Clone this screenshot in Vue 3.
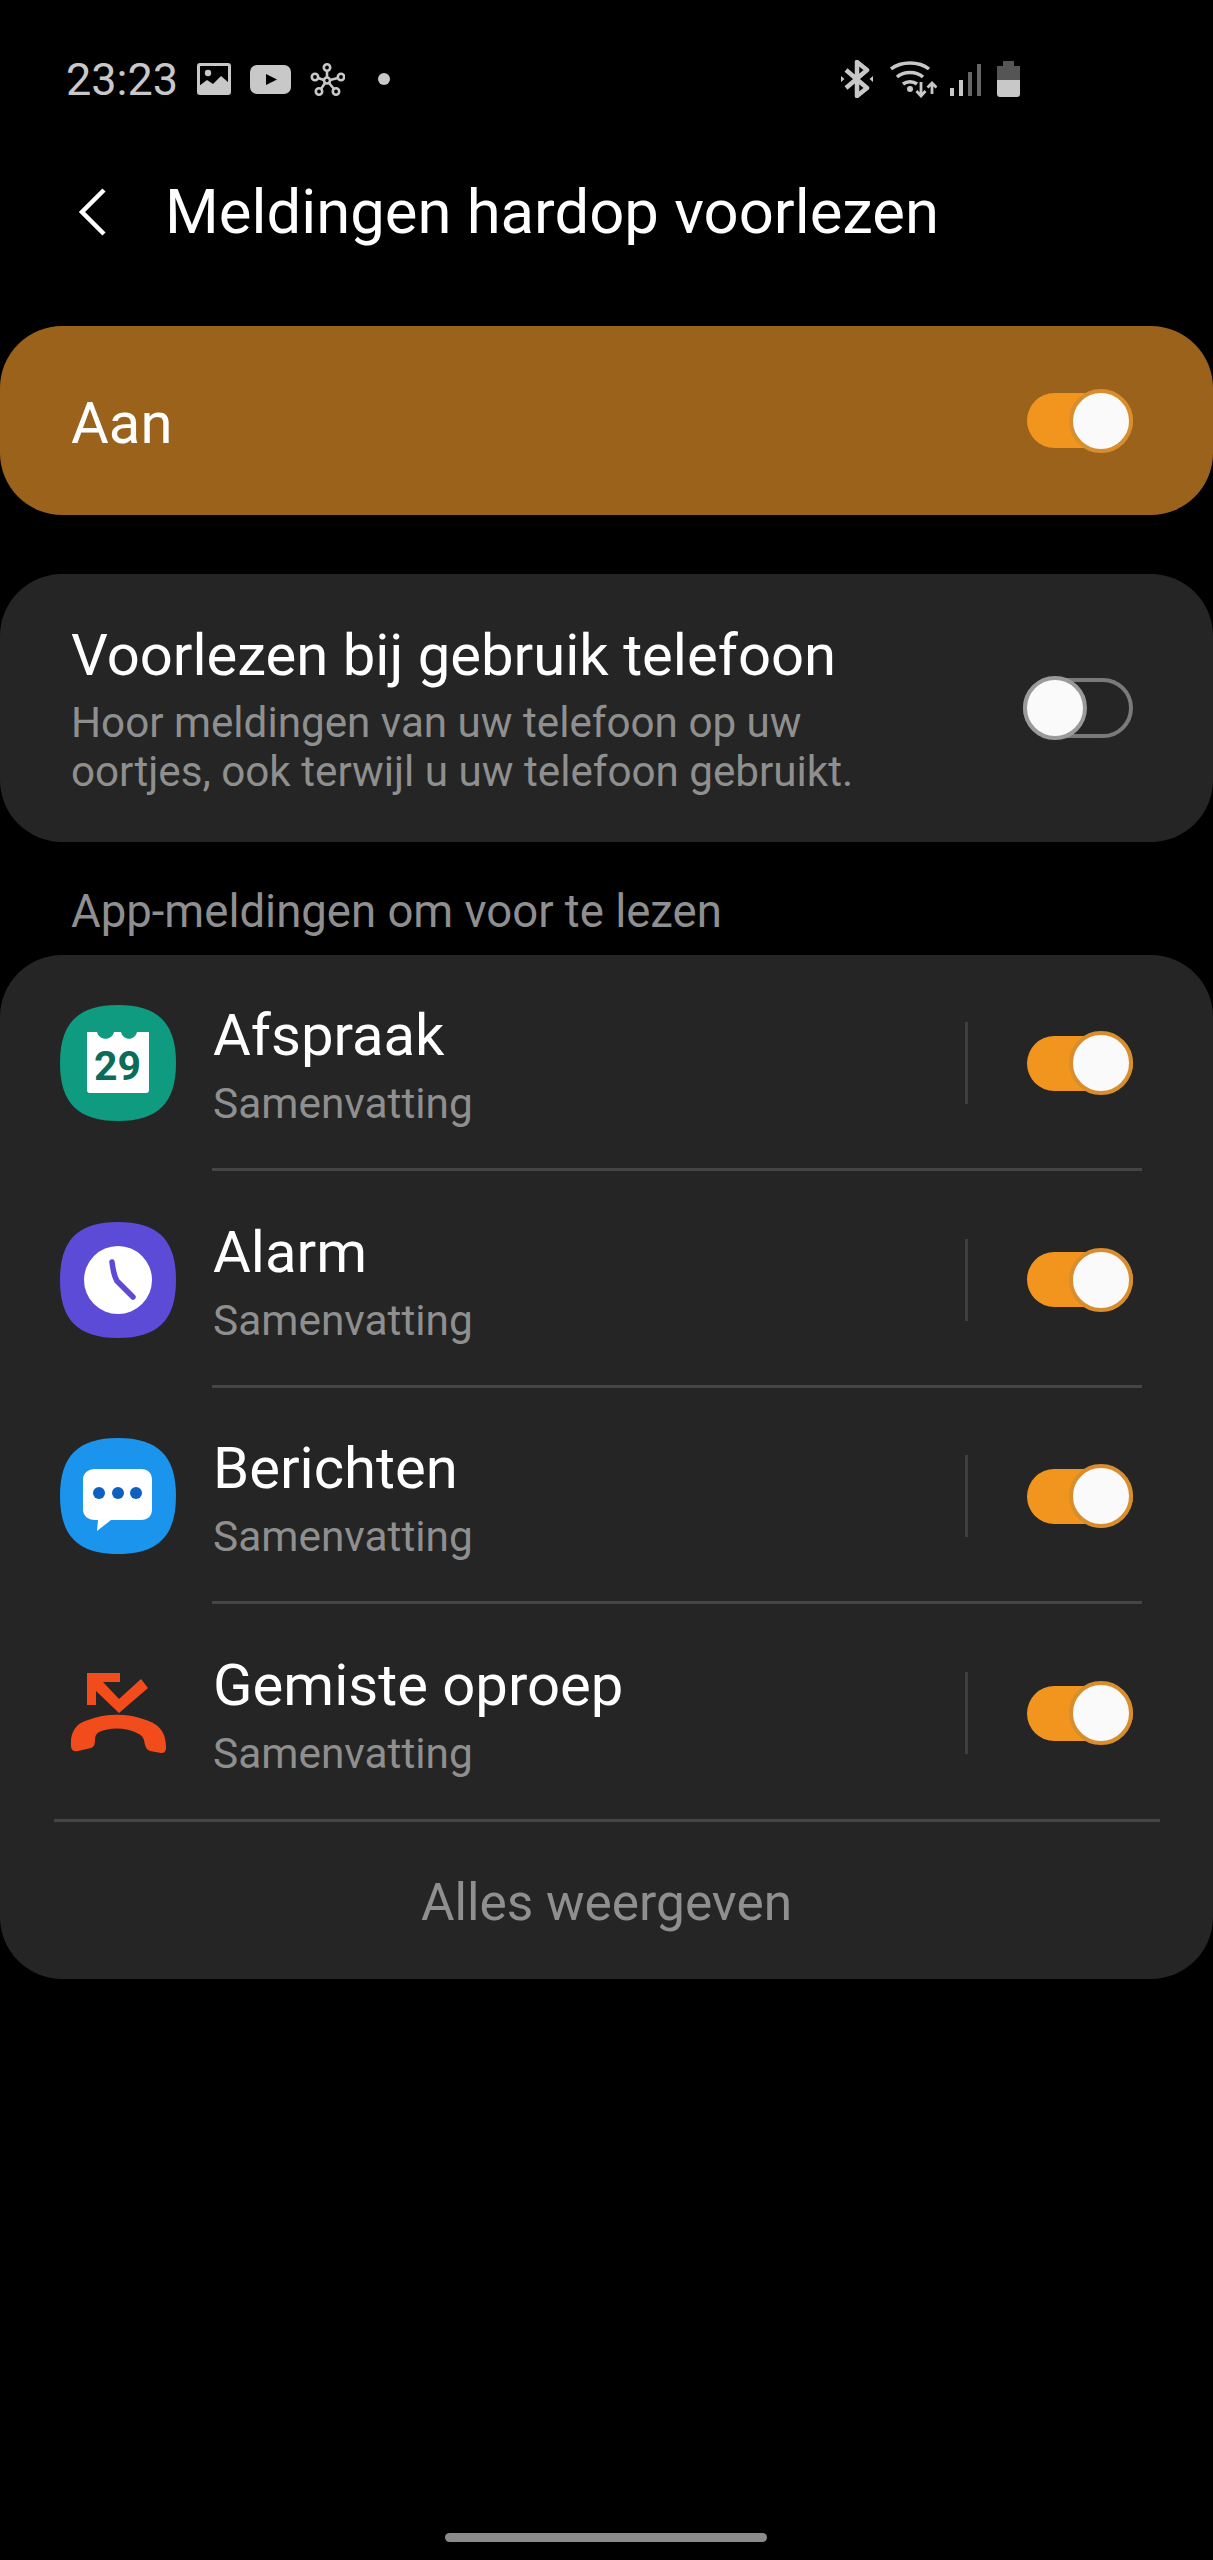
<template>
  <div class="phone">
    <div class="status">
      <div class="status-left">
        <span class="clock">23:23</span>
        <svg width="34" height="32" viewBox="0 0 34 32">
          <rect x="1.5" y="1.5" width="31" height="29" rx="1.5" fill="none" stroke="#c8c8c8" stroke-width="3" />
          <circle cx="11" cy="10" r="3.2" fill="#c8c8c8" />
          <path d="M2 23 L10 17 L16 21 L24 13 L32 20 L32 31 L2 31Z" fill="#c8c8c8" />
        </svg>
        <svg width="41" height="29" viewBox="0 0 41 29">
          <rect width="41" height="29" rx="7" fill="#c8c8c8" />
          <path d="M16 9 L27 14.5 L16 20Z" fill="#000" />
        </svg>
        <svg width="35" height="33" viewBox="0 0 35 33">
          <g fill="none" stroke="#c8c8c8" stroke-width="2.6">
            <circle cx="17" cy="4.5" r="3.2" /><circle cx="5" cy="14" r="3.2" /><circle cx="31" cy="14" r="3.2" />
            <circle cx="9" cy="28.5" r="3.2" /><circle cx="26" cy="28.5" r="3.2" /><circle cx="17" cy="17.5" r="3" />
            <path d="M17 8 V14 M8 15 L14 17 M28 15 L20 17 M11 26 L15 20 M24 26 L19 20" />
          </g>
        </svg>
        <span class="dot"></span>
      </div>
      <div class="status-right">
        <svg width="32" height="38" viewBox="0 0 32 38">
          <path d="M5 10 L26 28 L16 36 V2 L26 10 L5 28" fill="none" stroke="#c8c8c8" stroke-width="4.5" stroke-linejoin="round" />
          <path d="M0 16 L3.5 19 L0 22Z M32 16 L28.5 19 L32 22Z" fill="#c8c8c8" />
        </svg>
        <svg class="wifi" width="47" height="38" viewBox="0 0 47 38">
          <g fill="none" stroke="#c8c8c8" stroke-width="3.5">
            <path d="M1 9 C11 1 29 1 39 9" /><path d="M7 17 C14 11 26 11 33 17" /><path d="M13 24 C17 21 23 21 27 24" />
          </g>
          <circle cx="20" cy="29" r="3" fill="#c8c8c8" />
          <path d="M31 22 V36 M26.5 31 L31 36 L35.5 31 M42 34 V23 M37.5 27.5 L42 23 L46.5 27.5" fill="none" stroke="#c8c8c8" stroke-width="2.8" />
        </svg>
        <svg width="31" height="38" viewBox="0 0 31 38">
          <path d="M0 28 h4 v8 h-4Z M9 20 h4 v16 h-4Z" fill="#c8c8c8" />
          <path d="M18 12 h4 v24 h-4Z M27 4 h4 v32 h-4Z" fill="#666" />
        </svg>
        <svg class="battery" width="23" height="38" viewBox="0 0 23 38">
          <path d="M6 1 H17 V6 H23 V20 H0 V6 H6Z" fill="#555" />
          <path d="M0 20 H23 V34 C23 36 22 37 20 37 H3 C1 37 0 36 0 34Z" fill="#c8c8c8" />
        </svg>
      </div>
    </div>

    <div class="header">
      <svg class="back" width="32" height="50" viewBox="0 0 32 50">
        <path d="M28 3 L6 25 L28 47" fill="none" stroke="#fff" stroke-width="4.5" />
      </svg>
      <h1 class="title">Meldingen hardop voorlezen</h1>
    </div>

    <div class="card master">
      <span class="master-label">Aan</span>
      <div class="toggle on"><span class="thumb"></span></div>
    </div>

    <div class="card second">
      <div class="second-text">
        <div class="row-title">Voorlezen bij gebruik telefoon</div>
        <div class="desc">Hoor meldingen van uw telefoon op uw<br />oortjes, ook terwijl u uw telefoon gebruikt.</div>
      </div>
      <div class="toggle off"><span class="thumb"></span></div>
    </div>

    <div class="section">App-meldingen om voor te lezen</div>

    <div class="card list">
      <div v-for="app in apps" :key="app.name" class="row" :class="app.cls">
        <div class="app-icon">
          <svg v-if="app.name === 'Afspraak'" width="116" height="116" viewBox="0 0 116 116">
            <path :d="squircle" fill="#0f9b80" />
            <path d="M27 27 H37 C39 36 52 36 54 27 H61 C63 36 75 36 77 27 H89 V85 C89 87 88 88 86 88 H30 C28 88 27 87 27 85Z" fill="#fff" />
            <text x="57.5" y="75" text-anchor="middle" class="cal-num">29</text>
          </svg>
          <svg v-else-if="app.name === 'Alarm'" width="116" height="116" viewBox="0 0 116 116">
            <path :d="squircle" fill="#5c4bd6" />
            <circle cx="58" cy="58" r="34" fill="#fff" />
            <path d="M52 40 C53 48 54 54 57 59 L73 75" fill="none" stroke="#5c4bd6" stroke-width="5.5" stroke-linecap="round" stroke-linejoin="round" />
          </svg>
          <svg v-else-if="app.name === 'Berichten'" width="116" height="116" viewBox="0 0 116 116">
            <path :d="squircle" fill="#1a94ec" />
            <path d="M35 31 H81 C88 31 92 35 92 42 V71 C92 78 88 82 81 82 H51 L37 93 L38 82 H35 C28 82 23 78 23 71 V42 C23 35 28 31 35 31Z" fill="#fff" />
            <circle cx="39" cy="55" r="6" fill="#0f5fbf" /><circle cx="58" cy="55" r="6" fill="#0f5fbf" /><circle cx="76" cy="55" r="6" fill="#0f5fbf" />
          </svg>
          <svg v-else width="116" height="116" viewBox="0 0 116 116">
            <path d="M27 18 H60 V27 H43 L59 44 L81 24 L88 33 L59 58 L36 36 V50 H27Z" fill="#f34c1c" />
            <path d="M11 84 C13 72 20 67 28 65 C46 58 68 58 86 65 C98 69 106 76 106 92 C106 97 104 98 101 98 L90 96 C87 95 86 93 85 90 C84 85 84 82 79 79 C66 72 50 72 39 77 C36 79 35 81 35 85 C35 89 34 92 31 93 L18 96 C14 97 11 95 11 91Z" fill="#f34c1c" />
          </svg>
        </div>
        <div class="row-text">
          <div class="row-title">{{ app.name }}</div>
          <div class="row-sub">Samenvatting</div>
        </div>
        <span class="vline"></span>
        <div class="toggle on"><span class="thumb"></span></div>
      </div>
      <div class="show-all">Alles weergeven</div>
    </div>

    <div class="home-bar"></div>
  </div>
</template>

<script setup>
const squircle = 'M58 0 C98 0 116 18 116 58 C116 98 98 116 58 116 C18 116 0 98 0 58 C0 18 18 0 58 0Z'

const apps = [
  { name: 'Afspraak', cls: 'r1' },
  { name: 'Alarm', cls: 'r2' },
  { name: 'Berichten', cls: 'r3' },
  { name: 'Gemiste oproep', cls: 'r4' },
]
</script>

<style>
html, body {
  background: #000;
}
</style>

<style scoped>
.phone {
  position: relative;
  width: 1213px;
  height: 2560px;
  background: #000;
  color: #fff;
  font-family: Roboto, "Open Sans", sans-serif;
  overflow: hidden;
}
.status {
  height: 158px;
  box-sizing: border-box;
  padding: 56px 193px 0 66px;
  display: flex;
  justify-content: space-between;
  align-items: flex-start;
}
.status-left {
  display: flex;
  align-items: center;
  gap: 19px;
  height: 46px;
}
.clock {
  font-size: 45px;
  color: #c8c8c8;
}
.dot {
  width: 12px;
  height: 12px;
  border-radius: 50%;
  background: #c8c8c8;
  margin-left: 14px;
}
.status-right {
  display: flex;
  align-items: center;
  gap: 13px;
  height: 46px;
}
.wifi {
  margin-left: 4px;
}
.battery {
  margin-left: 3px;
}
.header {
  height: 108px;
  display: flex;
  align-items: center;
  padding-left: 76px;
}
.back {
  flex: none;
}
.title {
  margin: 0 0 0 57px;
  font-size: 61.6px;
  font-weight: 400;
  white-space: nowrap;
}
.card {
  background: #252525;
  border-radius: 62px;
}
.master {
  margin-top: 60px;
  height: 189px;
  background: #9a621b;
  display: flex;
  align-items: center;
  justify-content: space-between;
  padding: 0 80px 0 71px;
}
.master-label {
  font-size: 58px;
  padding-top: 4px;
}
.second {
  margin-top: 59px;
  height: 268px;
  box-sizing: border-box;
  padding: 0 80px 0 71px;
  display: flex;
  align-items: center;
  justify-content: space-between;
}
.row-title {
  font-size: 58px;
  line-height: 70px;
  white-space: nowrap;
}
.desc {
  font-size: 42.2px;
  line-height: 49px;
  color: #8f8f8f;
  white-space: nowrap;
  margin-top: 8px;
}
.section {
  height: 113px;
  box-sizing: border-box;
  padding: 45px 0 0 71px;
  font-size: 45.5px;
  line-height: 50px;
  color: #8f8f8f;
}
.list {
  height: 1024px;
  display: flex;
  flex-direction: column;
}
.row {
  position: relative;
  flex: none;
  display: flex;
  align-items: center;
  padding: 0 80px 0 60px;
}
.r1 { height: 216px; }
.r2 { height: 217px; }
.r3 { height: 216px; }
.r4 { height: 218px; }
.row::after {
  content: '';
  position: absolute;
  left: 212px;
  right: 71px;
  bottom: 0;
  height: 3px;
  background: #454545;
}
.r4::after {
  left: 54px;
  right: 53px;
}
.app-icon {
  width: 116px;
  height: 116px;
  flex: none;
}
.cal-num {
  font-family: Roboto, sans-serif;
  font-size: 41px;
  font-weight: 700;
  fill: #0d6b59;
}
.row-text {
  margin-left: 37px;
  flex: 1;
  padding-top: 3px;
}
.row-sub {
  font-size: 42.4px;
  line-height: 50px;
  color: #8f8f8f;
  margin-top: 9px;
}
.vline {
  width: 3px;
  height: 82px;
  background: #3f3f3f;
  margin-right: 59px;
}
.show-all {
  flex: 1;
  display: flex;
  align-items: center;
  justify-content: center;
  font-size: 51.4px;
  color: #8f8f8f;
  padding-top: 3px;
}
.toggle {
  position: relative;
  width: 106px;
  height: 55px;
  box-sizing: border-box;
  border-radius: 28px;
  flex: none;
}
.toggle.on {
  background: #f2951f;
}
.toggle.off {
  width: 110px;
  height: 60px;
  border-radius: 30px;
  border: 4px solid #7a7a7a;
}
.thumb {
  position: absolute;
  top: 50%;
  width: 56px;
  height: 56px;
  margin-top: -32px;
  border-radius: 50%;
  background: #fafafa;
  border: 4px solid #d98e2e;
}
.toggle.on .thumb {
  right: 0;
}
.toggle.off .thumb {
  left: -4px;
  border-color: #9a9a9a;
}
.home-bar {
  position: absolute;
  left: 445px;
  bottom: 18px;
  width: 322px;
  height: 9px;
  border-radius: 5px;
  background: #8a8a8a;
}
</style>
